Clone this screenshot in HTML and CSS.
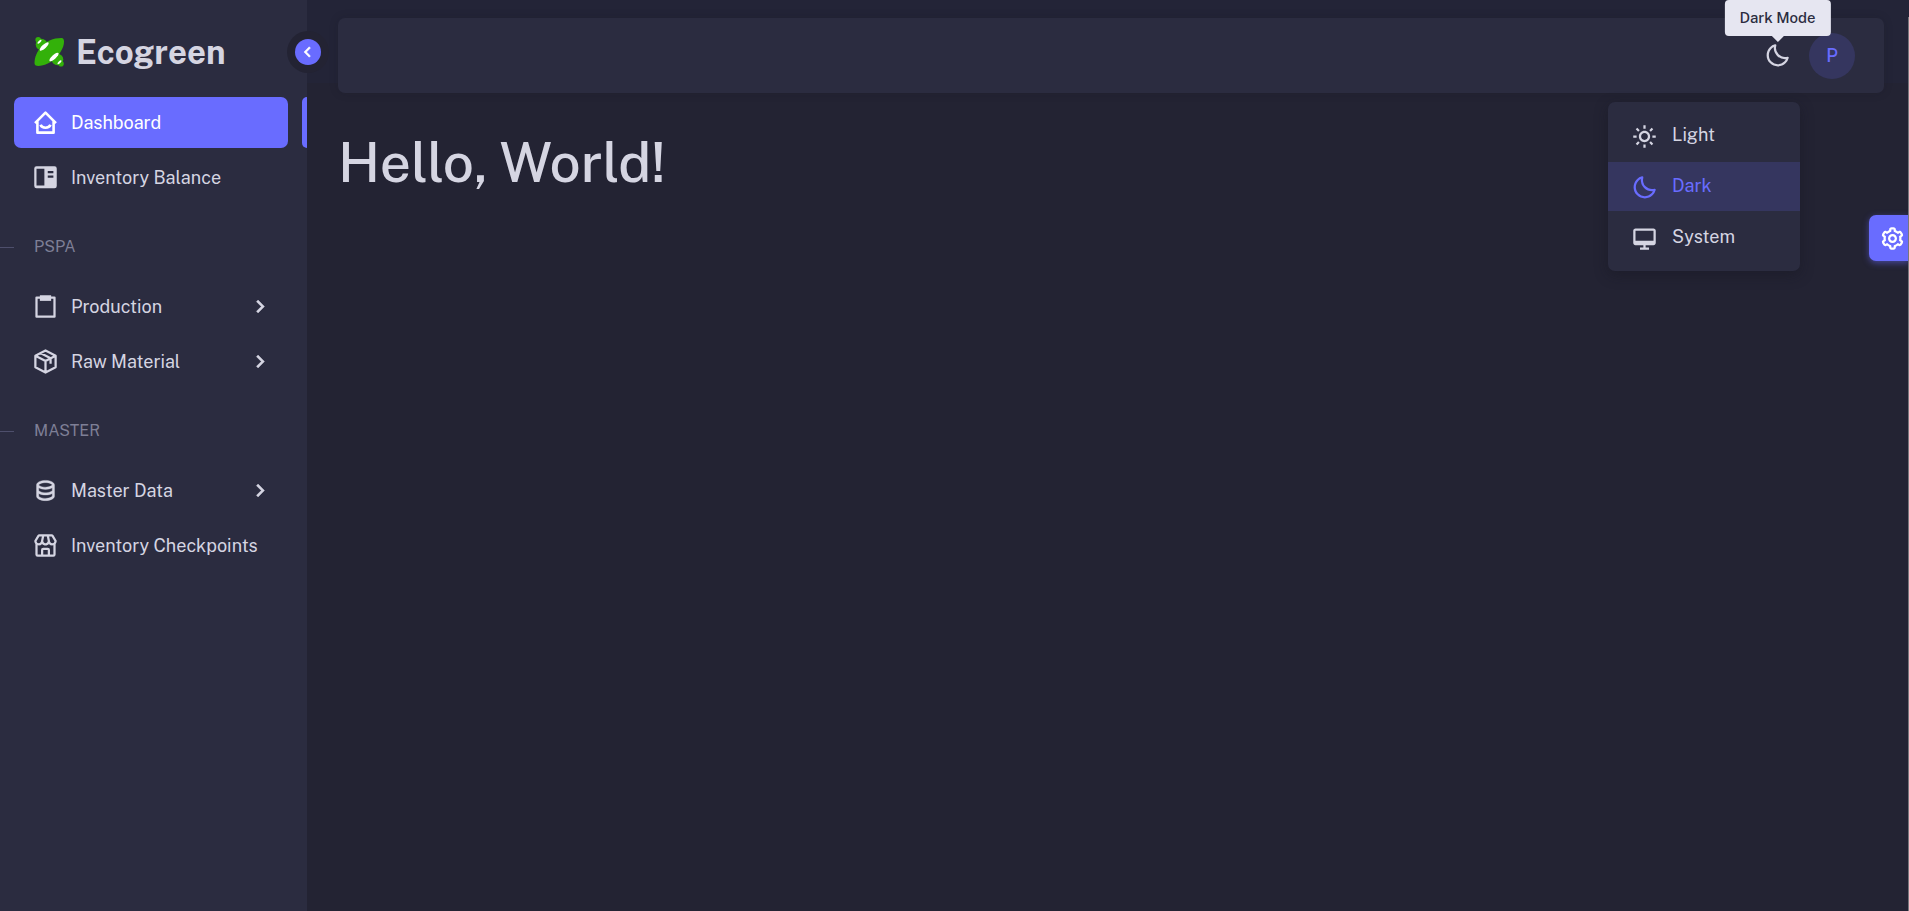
FILE: index.html
```html
<!DOCTYPE html>
<html lang="en">
<head>
<meta charset="utf-8">
<title>Ecogreen</title>
<link rel="stylesheet" href="styles.css">
</head>
<body>
<svg class="sprite" aria-hidden="true">
  <symbol id="moon" viewBox="0 0 24 24"><path fill="currentColor" d="M20.742 13.045a8.088 8.088 0 0 1-2.077.271c-2.135 0-4.14-.83-5.646-2.336a8.025 8.025 0 0 1-2.064-7.723A1 1 0 0 0 9.73 2.034a10.014 10.014 0 0 0-4.489 2.582c-3.898 3.898-3.898 10.243 0 14.143a9.937 9.937 0 0 0 7.072 2.93 9.93 9.93 0 0 0 7.07-2.929 10.007 10.007 0 0 0 2.583-4.491 1.001 1.001 0 0 0-1.224-1.224zm-2.772 4.301a7.947 7.947 0 0 1-5.656 2.343 7.953 7.953 0 0 1-5.658-2.344c-3.118-3.119-3.118-8.195 0-11.314a7.923 7.923 0 0 1 2.06-1.483 10.027 10.027 0 0 0 2.89 7.848 9.972 9.972 0 0 0 7.848 2.891 8.036 8.036 0 0 1-1.484 2.059z"/></symbol>
  <symbol id="sun" viewBox="0 0 24 24"><path fill="currentColor" d="M6.995 12c0 2.761 2.246 5.007 5.007 5.007s5.007-2.246 5.007-5.007-2.246-5.007-5.007-5.007S6.995 9.239 6.995 12zM12 8.993c1.658 0 3.007 1.349 3.007 3.007S13.658 15.007 12 15.007 8.993 13.658 8.993 12 10.342 8.993 12 8.993zM10.998 19h2v3h-2zm0-17h2v3h-2zm-9 9h3v2h-3zm17 0h3v2h-3zM4.219 18.363l2.12-2.122 1.415 1.414-2.12 2.122zM16.24 6.344l2.122-2.122 1.414 1.414-2.122 2.122zM6.342 7.759 4.22 5.637l1.415-1.414 2.12 2.122zm13.434 10.605-1.414 1.414-2.122-2.122 1.414-1.414z"/></symbol>
  <symbol id="desktop" viewBox="0 0 24 24"><path fill="currentColor" d="M20 3H4c-1.103 0-2 .897-2 2v11c0 1.103.897 2 2 2h7v2H8v2h8v-2h-3v-2h7c1.103 0 2-.897 2-2V5c0-1.103-.897-2-2-2zM4 14V5h16l.002 9H4z"/></symbol>
  <symbol id="left" viewBox="0 0 24 24"><path fill="currentColor" stroke="currentColor" stroke-width=".5" d="M13.293 6.293 7.586 12l5.707 5.707 1.414-1.414L10.414 12l4.293-4.293z"/></symbol>
  <symbol id="right" viewBox="0 0 24 24"><path fill="currentColor" stroke="currentColor" stroke-width=".4" d="M10.707 17.707 16.414 12l-5.707-5.707-1.414 1.414L13.586 12l-4.293 4.293z"/></symbol>
  <symbol id="home" viewBox="0 0 24 24"><path fill="none" stroke="currentColor" stroke-width="2.300" stroke-linejoin="round" d="M2.700 12.500 12 3.200l9.300 9.300M4.800 11v10h14.400V11M7.600 14c1.200 3.500 7.600 3.500 8.800 0"/></symbol>
  <symbol id="reader" viewBox="0 0 24 24"><path fill="currentColor" fill-rule="evenodd" d="M4 2h16a2 2 0 0 1 2 2v15.500a2 2 0 0 1-2 2H4a2 2 0 0 1-2-2V4a2 2 0 0 1 2-2zm0 2.200v15h7v-15zm10 2v2h5v-2zm0 4v2h5v-2z"/></symbol>
  <symbol id="clipboard" viewBox="0 0 24 24"><path fill="none" stroke="currentColor" stroke-width="2" stroke-linejoin="round" d="M4 4h16v17H4z"/><path fill="currentColor" d="M7 2h10v5H7z"/></symbol>
  <symbol id="package" viewBox="0 0 24 24"><path fill="none" stroke="currentColor" stroke-width="2" stroke-linejoin="round" d="m12 2.200 9 4.600v10.400l-9 4.600-9-4.600V6.800zM3 6.800l9 4.700 9-4.700M12 11.500v10M7.500 4.500l9 4.700V14"/></symbol>
  <symbol id="data" viewBox="0 0 24 24"><path fill="currentColor" stroke="currentColor" stroke-width=".3" d="M20 17V7c0-2.168-3.663-4-8-4S4 4.832 4 7v10c0 2.168 3.663 4 8 4s8-1.832 8-4zM12 5c3.691 0 5.931 1.507 6 1.994C17.931 7.493 15.691 9 12 9S6.069 7.493 6 7.006C6.069 6.507 8.309 5 12 5zM6 9.607C7.479 10.454 9.637 11 12 11s4.521-.546 6-1.393v2.387c-.069.499-2.309 2.006-6 2.006s-5.931-1.507-6-2V9.607zM6 17v-2.393C7.479 15.454 9.637 16 12 16s4.521-.546 6-1.393v2.390c-.069.496-2.309 2.003-6 2.003s-5.931-1.507-6-2z"/></symbol>
  <symbol id="store" viewBox="0 0 24 24"><path fill="currentColor" d="M21.999 8a.997.997 0 0 0-.143-.515L19.147 2.97A2.01 2.01 0 0 0 17.433 2H6.565c-.698 0-1.355.372-1.714.971L2.142 7.485A.997.997 0 0 0 1.999 8c0 1.005.386 1.914 1 2.618V20a2 2 0 0 0 2 2h14a2 2 0 0 0 2-2v-9.382c.614-.704 1-1.613 1-2.618zm-2.016.251A2.002 2.002 0 0 1 17.999 10c-1.103 0-2-.897-2-2 0-.068-.025-.128-.039-.192l.02-.004L15.219 4h2.214l2.55 4.251zm-9.977-.186L10.818 4h2.361l.813 4.065C13.957 9.138 13.079 10 11.999 10s-1.958-.862-1.993-1.935zM6.565 4h2.214l-.76 3.804.02.004c-.015.064-.04.124-.04.192 0 1.103-.897 2-2 2a2.002 2.002 0 0 1-1.984-1.749L6.565 4zm3.434 16v-4h4v4h-4zm6 0v-4a2 2 0 0 0-2-2h-4a2 2 0 0 0-2 2v4h-3v-8.142c.321.083.652.142 1 .142a3.99 3.99 0 0 0 3-1.357c.733.832 1.807 1.357 3 1.357s2.267-.525 3-1.357A3.99 3.99 0 0 0 17.999 12c.348 0 .679-.059 1-.142V20h-3z"/></symbol>
  <symbol id="cog" viewBox="0 0 24 24"><path fill="currentColor" d="M12 16c2.206 0 4-1.794 4-4s-1.794-4-4-4-4 1.794-4 4 1.794 4 4 4zm0-6c1.084 0 2 .916 2 2s-.916 2-2 2-2-.916-2-2 .916-2 2-2z"/><path fill="currentColor" d="m2.845 16.136 1 1.730c.531.917 1.809 1.261 2.730.730l.529-.306A8.100 8.100 0 0 0 9 19.402V20c0 1.103.897 2 2 2h2c1.103 0 2-.897 2-2v-.598a8.132 8.132 0 0 0 1.896-1.111l.529.306c.923.530 2.198.188 2.731-.731l.999-1.729a2.001 2.001 0 0 0-.731-2.732l-.505-.292a7.718 7.718 0 0 0 0-2.224l.505-.292a2.002 2.002 0 0 0 .731-2.732l-.999-1.729c-.531-.920-1.808-1.265-2.731-.732l-.529.306A8.100 8.100 0 0 0 15 4.598V4c0-1.103-.897-2-2-2h-2c-1.103 0-2 .897-2 2v.598a8.132 8.132 0 0 0-1.896 1.111l-.529-.306c-.924-.531-2.200-.187-2.731.732l-.999 1.729a2.001 2.001 0 0 0 .731 2.732l.505.292a7.683 7.683 0 0 0 0 2.223l-.505.292a2.003 2.003 0 0 0-.731 2.733zm3.326-2.758A5.703 5.703 0 0 1 6 12c0-.462.058-.926.170-1.378a.999.999 0 0 0-.470-1.108l-1.123-.650.998-1.729 1.145.662a.997.997 0 0 0 1.188-.142 6.071 6.071 0 0 1 2.384-1.399A1 1 0 0 0 11 5.300V4h2v1.300a1 1 0 0 0 .708.956 6.083 6.083 0 0 1 2.384 1.399.999.999 0 0 0 1.188.142l1.144-.661 1 1.729-1.124.649a1 1 0 0 0-.470 1.108c.112.452.170.916.170 1.378 0 .461-.058.925-.171 1.378a1 1 0 0 0 .471 1.108l1.123.649-.998 1.729-1.145-.661a.996.996 0 0 0-1.188.142 6.071 6.071 0 0 1-2.384 1.399A1 1 0 0 0 13 18.700l.002 1.300H11v-1.300a1 1 0 0 0-.708-.956 6.083 6.083 0 0 1-2.384-1.399.992.992 0 0 0-1.188-.141l-1.144.662-1-1.729 1.124-.651a1 1 0 0 0 .471-1.108z"/></symbol>
</svg>
<div class="layout">
  <aside class="sidebar">
    <a class="brand" href="#">
      <svg class="logo" viewBox="0 0 30 30" aria-hidden="true"><g fill="#33b10a"><path d="M0 26C0 15 10 1 27 1c4 0 3 8-1 14-6 9-13 13-22 14-3 0-4-1-4-3z"/><circle cx="3.700" cy="2.800" r="2.800"/><circle cx="7" cy="7.500" r="5.800"/><circle cx="23" cy="22.500" r="5.800"/><circle cx="26.500" cy="26.800" r="2.800"/></g><g fill="#fff"><ellipse cx="9.700" cy="9.500" rx="5.800" ry="2" transform="rotate(-42 9.700 9.500)"/><ellipse cx="19.500" cy="20" rx="6" ry="2" transform="rotate(-42 19.500 20)"/><ellipse cx="5" cy="4.800" rx="2.600" ry="1" transform="rotate(-42 5 4.800)"/><ellipse cx="25" cy="25.200" rx="2.600" ry="1" transform="rotate(-42 25 25.200)"/></g></svg>
      <span>Ecogreen</span>
    </a>
    <button class="collapse" type="button" aria-label="Collapse menu"><span><svg><use href="#left"/></svg></span></button>
    <nav class="menu">
      <a class="item active" href="#"><svg class="icon"><use href="#home"/></svg>Dashboard</a>
      <a class="item" href="#"><svg class="icon"><use href="#reader"/></svg>Inventory Balance</a>
      <h2 class="section">PSPA</h2>
      <a class="item" href="#"><svg class="icon"><use href="#clipboard"/></svg>Production<svg class="icon arrow"><use href="#right"/></svg></a>
      <a class="item" href="#"><svg class="icon"><use href="#package"/></svg>Raw Material<svg class="icon arrow"><use href="#right"/></svg></a>
      <h2 class="section">MASTER</h2>
      <a class="item" href="#"><svg class="icon"><use href="#data"/></svg>Master Data<svg class="icon arrow"><use href="#right"/></svg></a>
      <a class="item" href="#"><svg class="icon"><use href="#store"/></svg>Inventory Checkpoints</a>
    </nav>
  </aside>
  <main class="page">
    <header class="navbar">
      <div class="theme">
        <button class="theme-toggle" type="button" aria-label="Theme"><svg class="icon"><use href="#moon"/></svg></button>
        <div class="tooltip" role="tooltip">Dark Mode</div>
        <div class="dropdown">
          <button type="button"><svg class="icon"><use href="#sun"/></svg>Light</button>
          <button class="selected" type="button"><svg class="icon"><use href="#moon"/></svg>Dark</button>
          <button type="button"><svg class="icon"><use href="#desktop"/></svg>System</button>
        </div>
      </div>
      <button class="avatar" type="button">P</button>
    </header>
    <h1>Hello, World!</h1>
  </main>
</div>
<button class="customizer" type="button" aria-label="Settings"><svg class="icon"><use href="#cog"/></svg></button>
</body>
</html>
```
FILE: styles.css
```css
* { box-sizing: border-box; }
body {
  margin: 0;
  background: #232333;
  color: #d5d5e2;
  font: 18px/26px "Public Sans", Inter, sans-serif;
}
body::after { content: ""; position: fixed; top: 17px; right: 0; bottom: 0; width: 1px; background: #77777d; }
button { border: 0; padding: 0; font: inherit; color: inherit; background: none; cursor: pointer; }
a { color: inherit; text-decoration: none; }
.sprite { position: absolute; width: 0; height: 0; }
.icon { width: 27px; height: 27px; flex: none; }
.layout { display: flex; min-height: 100vh; }

.sidebar { position: relative; width: 307px; flex: none; background: #2b2c40; }
.brand { display: flex; align-items: center; gap: 11px; height: 97px; padding: 6px 34px 0; font-size: 33px; line-height: 40px; font-weight: 700; }
.logo { width: 31px; height: 30px; }
.collapse {
  position: absolute; top: 31px; right: -22px; z-index: 1;
  display: grid; place-items: center; width: 42px; height: 42px;
  border-radius: 50%; background: #232333;
}
.collapse span { display: grid; place-items: center; width: 26px; height: 26px; border-radius: 50%; background: #696cff; color: #fff; }
.collapse svg { width: 22px; height: 22px; }
.menu { display: flex; flex-direction: column; gap: 4px; }
.item { position: relative; display: flex; align-items: center; gap: 12px; height: 51px; margin: 0 19px 0 14px; padding: 0 15px 0 18px; border-radius: 7px; }
.item.active { background: #696cff; color: #fff; }
.item.active::after { content: ""; position: absolute; top: 0; right: -19px; width: 5px; height: 51px; border-radius: 6px 0 0 6px; background: #696cff; }
.arrow { margin-left: auto; }
.section { display: flex; align-items: center; gap: 20px; margin: 0; padding: 29px 0 19px; font-size: 16px; line-height: 22px; font-weight: 400; color: #7e7f96; }
.section::before { content: ""; width: 14px; height: 1px; background: #4e4f6c; }

.page { flex: 1; min-width: 0; padding: 18px 25px 0 31px; background: linear-gradient(#232437 83px, #232333 83px); }
.navbar { display: flex; align-items: center; justify-content: flex-end; gap: 18px; height: 75px; padding: 0 29px; border-radius: 7px; background: #2b2c40; box-shadow: 0 0 10px rgba(20, 20, 29, .15); }
.theme { position: relative; display: flex; }
.theme-toggle { display: flex; }
.avatar { width: 46px; height: 46px; border-radius: 50%; background: #35365f; color: #696cff; font-weight: 500; }
.tooltip { position: absolute; left: 50%; bottom: 33px; transform: translateX(-50%); padding: 6px 15px; border-radius: 4px; background: #e6e6f1; color: #2b2c40; font-size: 15px; line-height: 24px; font-weight: 500; white-space: nowrap; }
.tooltip::after { content: ""; position: absolute; top: 100%; left: 50%; margin-left: -6px; border: 6px solid transparent; border-top-color: #e6e6f1; border-bottom: 0; }
.dropdown { position: absolute; top: 60px; right: -9px; display: grid; gap: 2px; width: 192px; padding: 9px 0; border-radius: 7px; background: #2b2c40; box-shadow: 0 4px 14px rgba(20, 20, 29, .4); }
.dropdown button { display: flex; align-items: flex-start; gap: 14px; height: 49px; padding: 11px 23px; }
.dropdown .icon { margin-top: 1px; }
.dropdown .selected { background: #35365f; color: #696cff; }
h1 { margin: 36px 0 0; font-size: 55px; line-height: 66px; font-weight: 500; }

.customizer { position: fixed; top: 215px; right: 0; display: grid; place-items: center; width: 40px; height: 46px; padding-left: 6px; border-radius: 7px 0 0 7px; background: #696cff; color: #fff; box-shadow: 0 2px 6px rgba(105, 108, 255, .5); }
```
